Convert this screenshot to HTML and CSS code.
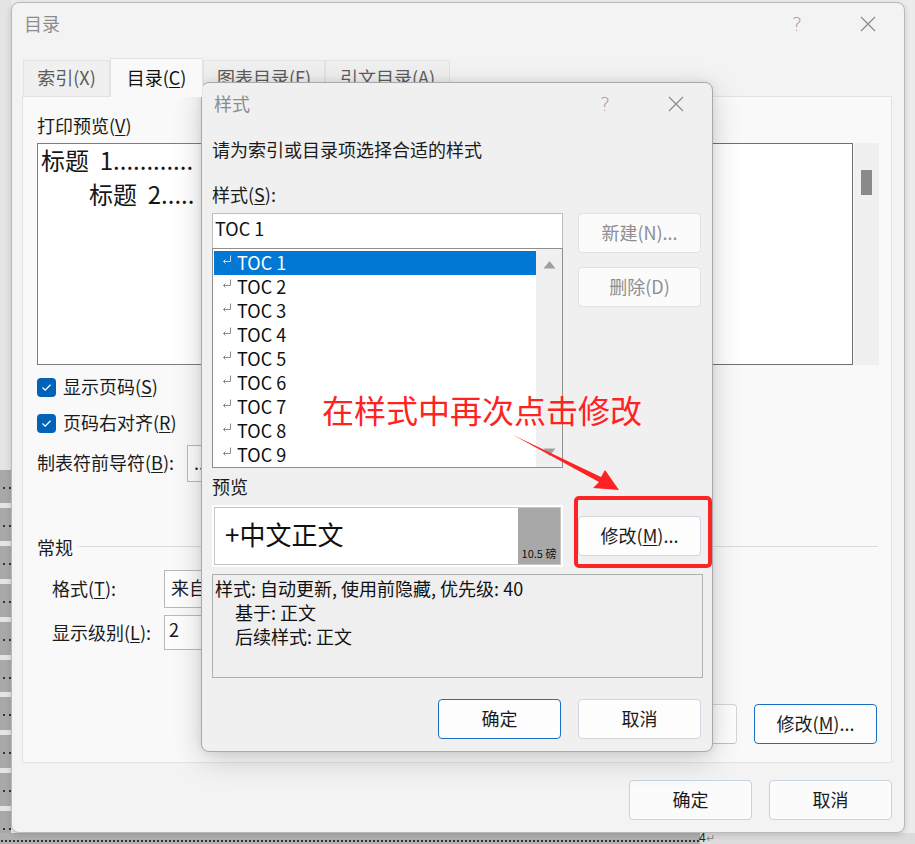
FILE: index.html
```html
<!DOCTYPE html>
<html lang="zh-CN">
<head>
    <meta charset="UTF-8">
    <meta name="viewport" content="width=device-width, initial-scale=1.0">
    <title>目录 - 样式</title>
    <link rel="stylesheet" href="styles.css">
</head>
<body>
<div class="desktop">

    <!-- Word document behind the dialogs -->
    <div class="doc-left">
        <div class="doc-row"></div>
        <div class="doc-row"></div>
        <div class="doc-row"></div>
        <div class="doc-row"></div>
        <div class="doc-row"></div>
        <div class="doc-row"></div>
        <div class="doc-row"></div>
        <div class="doc-row"></div>
        <div class="doc-row"></div>
        <div class="doc-row"></div>
    </div>
    <div class="doc-bottom">
        <span class="doc-leader"></span><span class="doc-page">4</span><span class="doc-mark">&#8629;</span>
    </div>

    <!-- 目录 dialog -->
    <div class="dialog toc-dialog">
        <div class="titlebar">
            <span class="title">目录</span>
            <span class="title-btn help">?</span>
            <span class="title-btn">
                <svg width="16" height="16" viewBox="0 0 16 16"><path d="M1 1 L15 15 M15 1 L1 15" stroke="#8a8a8a" stroke-width="1.2" fill="none"/></svg>
            </span>
        </div>

        <div class="tabs">
            <div class="tab">索引(X)</div>
            <div class="tab active">目录(<u>C</u>)</div>
            <div class="tab">图表目录(F)</div>
            <div class="tab">引文目录(A)</div>
        </div>

        <div class="tab-page">
            <div class="preview-cols">
                <div class="col">
                    <div class="label">打印预览(<u>V</u>)</div>
                    <div class="print-preview">
                        <div class="toc-line">标题&nbsp;&nbsp;1............</div>
                        <div class="toc-line level2">标题&nbsp;&nbsp;2.....</div>
                    </div>
                    <div class="check-row">
                        <span class="checkbox"><svg width="19" height="19" viewBox="0 0 19 19"><path d="M5.5 9.5 L8.2 12.2 L13.5 6.8" stroke="#fff" stroke-width="1.3" fill="none"/></svg></span>
                        <span>显示页码(<u>S</u>)</span>
                    </div>
                    <div class="check-row">
                        <span class="checkbox"><svg width="19" height="19" viewBox="0 0 19 19"><path d="M5.5 9.5 L8.2 12.2 L13.5 6.8" stroke="#fff" stroke-width="1.3" fill="none"/></svg></span>
                        <span>页码右对齐(<u>R</u>)</span>
                    </div>
                    <div class="field-row leader-row">
                        <span class="leader-label">制表符前导符(<u>B</u>):</span>
                        <div class="select leader-select">.......</div>
                    </div>
                </div>
                <div class="col">
                    <div class="web-preview">
                        <div class="web-box"></div>
                        <div class="vscroll"><div class="thumb"></div></div>
                    </div>
                </div>
            </div>

            <div class="group">
                <div class="group-head"><span>常规</span><span class="group-rule"></span></div>
                <div class="group-row">
                    <span class="group-label">格式(<u>T</u>):</span>
                    <div class="select format-select">来自模板</div>
                </div>
                <div class="group-row">
                    <span class="group-label">显示级别(<u>L</u>):</span>
                    <div class="spin">2</div>
                </div>
            </div>

            <div class="page-actions">
                <button class="btn">选项(<u>O</u>)...</button>
                <button class="btn default">修改(<u>M</u>)...</button>
            </div>
        </div>

        <div class="dialog-footer">
            <button class="btn soft">确定</button>
            <button class="btn soft">取消</button>
        </div>
    </div>

    <!-- 样式 dialog -->
    <div class="dialog style-dialog">
        <div class="titlebar">
            <span class="title">样式</span>
            <span class="title-btn help">?</span>
            <span class="title-btn">
                <svg width="16" height="16" viewBox="0 0 16 16"><path d="M1 1 L15 15 M15 1 L1 15" stroke="#8a8a8a" stroke-width="1.2" fill="none"/></svg>
            </span>
        </div>

        <div class="style-body">
            <div class="intro">请为索引或目录项选择合适的样式</div>
            <div class="label style-label">样式(<u>S</u>):</div>

            <div class="style-grid">
                <div class="picker">
                    <div class="style-input">TOC 1</div>
                    <div class="style-list">
                        <ul class="items">
                            <li class="selected"><svg class="para" width="10" height="10" viewBox="0 0 10 10"><path d="M8.5 0.5 V6.5 H1.5 M3.5 4.5 L1.5 6.5 L3.5 8.5" stroke="currentColor" fill="none"/></svg>TOC 1</li>
                            <li><svg class="para" width="10" height="10" viewBox="0 0 10 10"><path d="M8.5 0.5 V6.5 H1.5 M3.5 4.5 L1.5 6.5 L3.5 8.5" stroke="currentColor" fill="none"/></svg>TOC 2</li>
                            <li><svg class="para" width="10" height="10" viewBox="0 0 10 10"><path d="M8.5 0.5 V6.5 H1.5 M3.5 4.5 L1.5 6.5 L3.5 8.5" stroke="currentColor" fill="none"/></svg>TOC 3</li>
                            <li><svg class="para" width="10" height="10" viewBox="0 0 10 10"><path d="M8.5 0.5 V6.5 H1.5 M3.5 4.5 L1.5 6.5 L3.5 8.5" stroke="currentColor" fill="none"/></svg>TOC 4</li>
                            <li><svg class="para" width="10" height="10" viewBox="0 0 10 10"><path d="M8.5 0.5 V6.5 H1.5 M3.5 4.5 L1.5 6.5 L3.5 8.5" stroke="currentColor" fill="none"/></svg>TOC 5</li>
                            <li><svg class="para" width="10" height="10" viewBox="0 0 10 10"><path d="M8.5 0.5 V6.5 H1.5 M3.5 4.5 L1.5 6.5 L3.5 8.5" stroke="currentColor" fill="none"/></svg>TOC 6</li>
                            <li><svg class="para" width="10" height="10" viewBox="0 0 10 10"><path d="M8.5 0.5 V6.5 H1.5 M3.5 4.5 L1.5 6.5 L3.5 8.5" stroke="currentColor" fill="none"/></svg>TOC 7</li>
                            <li><svg class="para" width="10" height="10" viewBox="0 0 10 10"><path d="M8.5 0.5 V6.5 H1.5 M3.5 4.5 L1.5 6.5 L3.5 8.5" stroke="currentColor" fill="none"/></svg>TOC 8</li>
                            <li><svg class="para" width="10" height="10" viewBox="0 0 10 10"><path d="M8.5 0.5 V6.5 H1.5 M3.5 4.5 L1.5 6.5 L3.5 8.5" stroke="currentColor" fill="none"/></svg>TOC 9</li>
                        </ul>
                        <div class="list-scroll">
                            <svg width="13" height="9" viewBox="0 0 13 9"><path d="M0.5 8.5 L6.5 1 L12.5 8.5 Z" fill="#a0a0a0"/></svg>
                            <svg width="13" height="9" viewBox="0 0 13 9"><path d="M0.5 0.5 L6.5 8 L12.5 0.5 Z" fill="#a0a0a0"/></svg>
                        </div>
                    </div>
                </div>
                <div class="side-buttons">
                    <button class="btn" disabled>新建(N)...</button>
                    <button class="btn" disabled>删除(D)</button>
                </div>
            </div>

            <div class="label preview-label">预览</div>

            <div class="style-grid preview-row">
                <div class="sample">
                    <div class="sample-inner">
                        <div class="sample-text">+中文正文</div>
                        <div class="sample-size">10.5 磅</div>
                    </div>
                </div>
                <button class="btn plain">修改(<u>M</u>)...</button>
            </div>

            <div class="description">
                <div>样式: 自动更新, 使用前隐藏, 优先级: 40</div>
                <div class="indent">基于: 正文</div>
                <div class="indent">后续样式: 正文</div>
            </div>

            <div class="dialog-footer">
                <button class="btn default">确定</button>
                <button class="btn plain">取消</button>
            </div>
        </div>
    </div>

    <!-- red annotation drawn over the screenshot -->
    <div class="note">在样式中再次点击修改</div>
    <svg class="note-arrow" width="915" height="844" viewBox="0 0 915 844">
        <polygon points="513,435 601,477 605,470 619,490 593,488 599,482" fill="#ff2222"/>
    </svg>
    <div class="note-box"></div>

</div>
</body>
</html>
```

FILE: styles.css
```css
* {
    box-sizing: border-box;
}

html, body {
    margin: 0;
    padding: 0;
}

body {
    width: 915px;
    height: 844px;
    overflow: hidden;
    font-family: "Noto Sans CJK SC", "Noto Sans", sans-serif;
    font-size: 18px;
    line-height: 24px;
    color: #1b1b1b;
    background: #ececec;
}

u {
    text-underline-offset: 2px;
}

.desktop {
    position: relative;
    width: 915px;
    height: 844px;
}

/* Document in the background */
.doc-left {
    position: absolute;
    left: 0;
    top: 0;
    width: 11px;
    height: 844px;
    padding-top: 470px;
    display: flex;
    flex-direction: column;
    gap: 5px;
    background: #e4e4e4;
}

.doc-row {
    height: 34px;
    background: #a9a9a9 radial-gradient(circle, #333 0.9px, transparent 1.2px) 1px 16px / 6px 4px repeat-x;
}

.doc-bottom {
    position: absolute;
    left: 0;
    bottom: 0;
    width: 915px;
    height: 11px;
    display: flex;
    align-items: flex-start;
    background: linear-gradient(to right, #b0b0b0 0, #b0b0b0 700px, #dcdcdc 700px);
    font-family: "Liberation Sans", sans-serif;
    font-size: 12px;
    line-height: 11px;
}

.doc-leader {
    width: 699px;
    height: 11px;
    background: radial-gradient(circle, #333 0.9px, transparent 1.2px) 0 6px / 4px 4px repeat-x;
}

.doc-page {
    color: #222;
}

.doc-mark {
    color: #888;
    font-size: 11px;
}

/* Dialog frames */
.dialog {
    position: absolute;
    display: flex;
    flex-direction: column;
    border: 1px solid #b9b9b9;
    border-radius: 8px;
}

.toc-dialog {
    left: 11px;
    top: 2px;
    width: 894px;
    height: 831px;
    background: #f3f3f3;
    box-shadow: 0 2px 6px rgba(0, 0, 0, 0.15);
}

.style-dialog {
    left: 201px;
    top: 82px;
    width: 512px;
    height: 670px;
    background: #f0f0f0;
    border-color: #a8a8a8;
    box-shadow: 0 8px 30px rgba(0, 0, 0, 0.18), 0 0 8px rgba(0, 0, 0, 0.08);
}

.titlebar {
    height: 42px;
    flex: none;
    display: flex;
    align-items: center;
    padding-left: 12px;
}

.title {
    flex: 1;
    color: #8c8c8c;
    padding-bottom: 3px;
}

.title-btn {
    width: 72px;
    display: flex;
    justify-content: center;
    align-items: center;
    color: #9a9a9a;
}

.title-btn.help {
    font-family: "DejaVu Sans", sans-serif;
    font-size: 19px;
    font-weight: 200;
    padding-left: 2px;
}

/* Tabs */
.tabs {
    display: flex;
    align-items: flex-end;
    height: 38px;
    margin-top: 13px;
    padding-left: 11px;
}

.tab {
    height: 36px;
    padding: 0 12px 3px;
    display: flex;
    align-items: center;
    justify-content: center;
    border: 1px solid #e3e3e3;
    border-bottom: none;
    background: #f0f0f0;
    color: #5c5c5c;
}

.tab:nth-child(1) { width: 87px; }
.tab:nth-child(3) { width: 122px; }
.tab:nth-child(4) { width: 125px; }

.tab.active {
    width: 93px;
    height: 39px;
    margin-bottom: -1px;
    position: relative;
    z-index: 1;
    background: #f9f9f9;
    color: #111;
    padding-bottom: 3px;
}

.tab-page {
    height: 667px;
    margin: 0 12px 0 10px;
    padding: 18px 12px 18px 14px;
    border: 1px solid #e3e3e3;
    background: #f9f9f9;
    display: flex;
    flex-direction: column;
}

.preview-cols {
    display: grid;
    grid-template-columns: 411px 411px;
    column-gap: 20px;
}

.label,
.intro {
    height: 24px;
    line-height: 21px;
    padding-bottom: 3px;
}

.print-preview {
    margin-top: 4px;
    height: 222px;
    border: 1px solid #7d7d7d;
    background: #fff;
    padding-left: 3px;
    font-size: 24px;
    white-space: nowrap;
    color: #161616;
}

.toc-line {
    line-height: 31px;
    padding-bottom: 3px;
}

.toc-line.level2 {
    padding-left: 48px;
}

.check-row {
    display: flex;
    align-items: center;
    gap: 7px;
    height: 24px;
    margin-top: 10px;
    line-height: 22px;
}

.check-row + .check-row {
    margin-top: 12px;
}

.check-row span:last-child {
    padding-bottom: 2px;
}

.checkbox {
    width: 19px;
    height: 19px;
    border-radius: 4px;
    background: #0063b8;
    display: flex;
}

.field-row {
    display: flex;
    align-items: center;
}

.leader-row {
    margin-top: 10px;
}

.leader-label {
    width: 150px;
    padding-bottom: 3px;
}

.select {
    height: 37px;
    width: 180px;
    border: 1px solid #b9b9b9;
    background: #fdfdfd;
    padding: 4px 6px;
}

.web-preview {
    margin-top: 28px;
    height: 222px;
    display: flex;
}

.web-box {
    flex: 1;
    border: 1px solid #6f6f6f;
    background: #fff;
}

.vscroll {
    width: 25px;
    margin-left: 1px;
    background: #f0f0f0;
    padding-top: 27px;
}

.thumb {
    width: 11px;
    height: 25px;
    margin-left: 7px;
    background: #8a8a8a;
}

/* 常规 group */
.group {
    margin-top: 54px;
}

.group-head {
    display: flex;
    align-items: center;
    gap: 6px;
    height: 24px;
}

.group-head span:first-child {
    padding-bottom: 2px;
}

.group-rule {
    flex: 1;
    height: 1px;
    background: #dadada;
    margin-top: -4px;
    margin-right: 1px;
}

.group-row {
    display: flex;
    align-items: center;
    padding-left: 15px;
    margin-top: 10px;
}

.group-row + .group-row {
    margin-top: 7px;
}

.group-label {
    width: 112px;
    padding-bottom: 2px;
}

.format-select {
    height: 38px;
    width: 220px;
}

.spin {
    height: 35px;
    width: 80px;
    border: 1px solid #b9b9b9;
    background: #fdfdfd;
    padding: 1px 4px;
}

.page-actions {
    margin-top: auto;
    display: flex;
    justify-content: flex-end;
    gap: 17px;
    padding-right: 2px;
}

/* Buttons */
.btn {
    width: 123px;
    height: 40px;
    font: inherit;
    color: #1b1b1b;
    background: #fdfdfd;
    border: 1px solid #d3d3d3;
    border-bottom-color: #c2c2c2;
    border-radius: 4px;
    padding: 0 0 2px;
}

.btn.default {
    border-color: #1a6fc4;
}

.btn.soft {
    border-color: #c8d3de;
    background: #fbfbfb;
}

.btn.plain {
    border-color: #cfd6de;
}

.btn:disabled {
    color: #8e8e8e;
    background: #fbfbfb;
    border-color: #e2e2e2;
}

.dialog-footer {
    display: flex;
    justify-content: flex-end;
    gap: 17px;
    margin-top: 17px;
    padding-right: 12px;
}

/* 样式 dialog body */
.style-body {
    padding: 0 11px 0 10px;
    display: flex;
    flex-direction: column;
}

.intro {
    margin-top: 14px;
}

.style-label {
    margin-top: 21px;
}

.style-grid {
    display: grid;
    grid-template-columns: 351px 123px;
    column-gap: 15px;
    margin-top: 5px;
}

.style-input {
    height: 36px;
    border: 1px solid #bdbdbd;
    border-bottom-color: #8d8d8d;
    background: #fff;
    padding: 2px 2px;
    color: #111;
}

.style-list {
    height: 220px;
    margin-top: -1px;
    border: 1px solid #8f8f8f;
    background: #fff;
    display: flex;
}

.items {
    list-style: none;
    margin: 0;
    padding: 2px 0 0 1px;
    flex: 1;
}

.items li {
    height: 24px;
    display: flex;
    align-items: flex-start;
    padding-left: 8px;
    line-height: 23px;
    color: #111;
}

.items li.selected {
    background: #0078d4;
    color: #fff;
}

.para {
    color: #8a8a8a;
    margin: 4px 5px 0 0;
    flex: none;
}

.selected .para {
    color: #c9dcf0;
}

.list-scroll {
    width: 26px;
    background: #f0f0f0;
    display: flex;
    flex-direction: column;
    justify-content: space-between;
    align-items: center;
    padding: 11px 0 10px;
}

.side-buttons {
    display: flex;
    flex-direction: column;
    gap: 14px;
}

.preview-label {
    margin-top: 8px;
}

.preview-row {
    align-items: center;
}

.sample {
    height: 62px;
    background: #fff;
    border: 2px solid #fff;
}

.sample-inner {
    height: 100%;
    border: 1px solid #c6c6c6;
    display: flex;
}

.sample-text {
    flex: 1;
    padding-left: 10px;
    font-size: 26px;
    line-height: 52px;
    color: #111;
}

.sample-size {
    width: 42px;
    background: #a8a8a8;
    font-size: 11px;
    line-height: 14px;
    color: #111;
    display: flex;
    align-items: flex-end;
    justify-content: center;
    padding-bottom: 4px;
    white-space: nowrap;
}

.description {
    margin-top: 7px;
    margin-right: -2px;
    height: 104px;
    border: 1px solid #b0b0b0;
    background: #efefef;
    padding: 1px 2px;
    color: #111;
}

.description .indent {
    padding-left: 20px;
}

.style-body .dialog-footer {
    margin-top: 21px;
    padding-right: 0;
}

/* Annotation overlay */
.note {
    position: absolute;
    left: 322px;
    top: 387px;
    font-size: 32px;
    line-height: 44px;
    color: #ff2222;
    white-space: nowrap;
}

.note-arrow {
    position: absolute;
    left: 0;
    top: 0;
    pointer-events: none;
}

.note-box {
    position: absolute;
    left: 574px;
    top: 496px;
    width: 138px;
    height: 72px;
    border: 4px solid #ff2424;
    border-radius: 5px;
}
```
